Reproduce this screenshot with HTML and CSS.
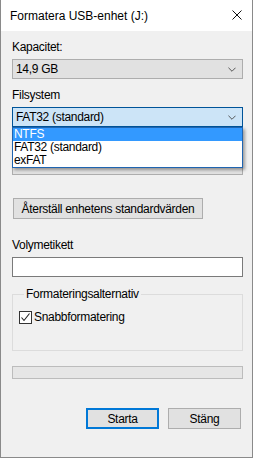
FILE: index.html
```html
<!DOCTYPE html>
<html lang="sv">
<head>
  <meta charset="UTF-8">
  <title>Formatera USB-enhet (J:)</title>
  <link rel="stylesheet" href="styles.css">
</head>
<body>
  <div class="window">
    <div class="titlebar">
      <span class="title">Formatera USB-enhet (J:)</span>
      <svg class="close-icon" viewBox="0 0 10 10">
        <path d="M0.5 0.5 L9.5 9.5 M9.5 0.5 L0.5 9.5" stroke="#111" stroke-width="1" fill="none"/>
      </svg>
    </div>
    <div class="content">
      <div class="field">
        <div class="label">Kapacitet:</div>
        <div class="combo">
          <span>14,9 GB</span>
          <svg class="chevron" viewBox="0 0 9 5"><path d="M0.5 0.5 L4.5 4.5 L8.5 0.5" stroke="#444" fill="none"/></svg>
        </div>
      </div>
      <div class="field field-fs">
        <div class="label">Filsystem</div>
        <div class="combo-wrap">
          <div class="combo focused">
            <span>FAT32 (standard)</span>
            <svg class="chevron" viewBox="0 0 9 5"><path d="M0.5 0.5 L4.5 4.5 L8.5 0.5" stroke="#444" fill="none"/></svg>
          </div>
          <div class="dropdown">
            <div class="option selected">NTFS</div>
            <div class="option">FAT32 (standard)</div>
            <div class="option">exFAT</div>
          </div>
        </div>
      </div>
      <!-- allocation size field, covered by the open list -->
      <div class="field field-alloc">
        <div class="label"></div>
        <div class="combo"></div>
      </div>
      <button class="btn btn-reset">Återställ enhetens standardvärden</button>
      <div class="field field-vol">
        <div class="label">Volymetikett</div>
        <div class="textbox"></div>
      </div>
      <fieldset class="group">
        <legend>Formateringsalternativ</legend>
        <div class="check-row">
          <span class="checkbox">
            <svg viewBox="0 0 11 11"><path d="M1.5 5.5 L4 8.5 L9.5 1.5" stroke="#222" stroke-width="1.1" fill="none"/></svg>
          </span>
          <span>Snabbformatering</span>
        </div>
      </fieldset>
      <div class="progress"></div>
      <div class="actions">
        <button class="btn btn-default">Starta</button>
        <button class="btn">Stäng</button>
      </div>
    </div>
  </div>
</body>
</html>
```

FILE: styles.css
```css
body {
  margin: 0;
  font-family: "Liberation Sans", Arial, sans-serif;
  font-size: 12px;
  color: #000;
  background: #fff;
}
.window {
  width: 253px;
  height: 458px;
  box-sizing: border-box;
  border: 1px solid #8a8a8a;
  border-top: none;
  background: #f0f0f0;
  display: flex;
  flex-direction: column;
}
.titlebar {
  height: 31px;
  background: #fff;
  display: flex;
  align-items: center;
  justify-content: space-between;
  padding: 0 10px 0 9px;
  flex-shrink: 0;
}
.title {
  font-size: 12px;
  color: #000;
}
.close-icon {
  width: 10px;
  height: 10px;
  margin-top: -1px;
}
.content {
  padding: 9px 9px 0 11px;
  display: flex;
  flex-direction: column;
  letter-spacing: -0.3px;
}
.label {
  line-height: 15px;
  height: 15px;
  margin-bottom: 4px;
}
.combo {
  height: 20px;
  box-sizing: border-box;
  border: 1px solid #adadad;
  background: #e1e1e1;
  display: flex;
  align-items: center;
  justify-content: space-between;
  padding: 0 6px 0 3px;
}
.combo.focused {
  background: #cce4f7;
  border-color: #005499;
}
.chevron {
  width: 8px;
  height: 5px;
}
.field-fs {
  margin-top: 9px;
  position: relative;
  z-index: 2;
}
.combo-wrap {
  position: relative;
}
.dropdown {
  position: absolute;
  top: 20px;
  left: 0;
  right: 0;
  background: #fff;
  border: 1px solid #1f64b0;
  box-shadow: 2px 2px 3px rgba(0, 0, 0, 0.35);
}
.option {
  height: 13px;
  line-height: 13px;
  padding-left: 1px;
}
.option.selected {
  background: #3399ff;
  color: #fff;
}
.field-alloc {
  margin-top: 9px;
}
.btn {
  font-family: inherit;
  font-size: 12px;
  letter-spacing: -0.3px;
  color: #000;
  background: #e1e1e1;
  border: 1px solid #adadad;
  height: 21px;
  padding: 0;
  margin: 0;
}
.btn-reset {
  margin-top: 23px;
  margin-left: 1px;
  width: 190px;
}
.field-vol {
  margin-top: 19px;
}
.textbox {
  height: 20px;
  box-sizing: border-box;
  border: 1px solid #7a7a7a;
  background: #fff;
}
.group {
  margin: 10px 0 0;
  padding: 7px 6px 0;
  border: 1px solid #dcdcdc;
  height: 64px;
  box-sizing: border-box;
}
.group legend {
  padding: 0 2px;
  margin-left: 5px;
  line-height: 15px;
}
.check-row {
  display: flex;
  align-items: center;
  gap: 2px;
  margin-top: 1px;
}
.checkbox {
  width: 13px;
  height: 13px;
  box-sizing: border-box;
  border: 1px solid #333;
  background: #fff;
  display: flex;
}
.checkbox svg {
  width: 11px;
  height: 11px;
}
.progress {
  margin-top: 15px;
  height: 13px;
  box-sizing: border-box;
  border: 1px solid #bcbcbc;
  background: #e6e6e6;
}
.actions {
  margin-top: 29px;
  display: flex;
  justify-content: flex-end;
  gap: 9px;
  padding-right: 2px;
}
.actions .btn {
  width: 73px;
  height: 21px;
}
.btn-default {
  border: 2px solid #0078d7;
}
```
